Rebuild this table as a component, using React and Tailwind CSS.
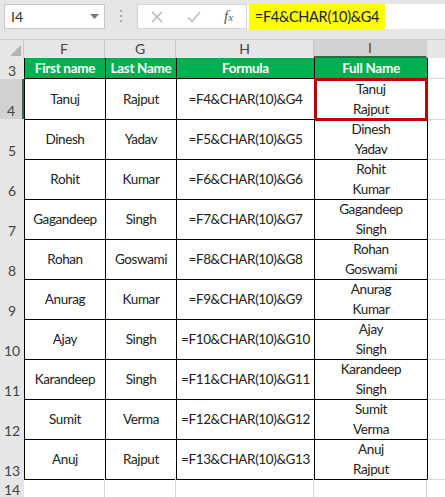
import React from "react";

const rows = [
  { n: 4, f: "Tanuj", g: "Rajput" },
  { n: 5, f: "Dinesh", g: "Yadav" },
  { n: 6, f: "Rohit", g: "Kumar" },
  { n: 7, f: "Gagandeep", g: "Singh" },
  { n: 8, f: "Rohan", g: "Goswami" },
  { n: 9, f: "Anurag", g: "Kumar" },
  { n: 10, f: "Ajay", g: "Singh" },
  { n: 11, f: "Karandeep", g: "Singh" },
  { n: 12, f: "Sumit", g: "Verma" },
  { n: 13, f: "Anuj", g: "Rajput" },
];

const gridCols = "grid grid-cols-[24px_81px_71px_138px_113px_1fr]";

const FormulaBar = () => (
  <div className="relative h-[40px] bg-[#e6e6e6] border-b border-[#d0d0d0]">
    {/* name box */}
    <div className="absolute left-[4px] top-[4px] flex h-[25px] w-[101px] items-center justify-between border border-[#c6c6c6] bg-white pl-[6px] pr-[5px]">
      <span className="text-[14px] text-[#333]">I4</span>
      <svg width="9" height="6" viewBox="0 0 9 6"><path d="M0 0h9L4.5 5z" fill="#777" /></svg>
    </div>
    {/* dots */}
    <div className="absolute left-[120px] top-[10px] flex flex-col gap-[3px]">
      <span className="h-[2px] w-[2px] bg-[#aaa]" />
      <span className="h-[2px] w-[2px] bg-[#aaa]" />
      <span className="h-[2px] w-[2px] bg-[#aaa]" />
    </div>
    {/* icons box */}
    <div className="absolute left-[137px] top-[4px] flex h-[25px] w-[110px] items-center border border-[#d4d4d4] bg-white">
      <svg className="ml-[13px]" width="12" height="12" viewBox="0 0 12 12"><path d="M1 1l10 10M11 1L1 11" stroke="#b8b8b8" strokeWidth="1.6" /></svg>
      <svg className="ml-[24px]" width="14" height="12" viewBox="0 0 14 12"><path d="M1 6.5l4 4L13 1" stroke="#c4c4c4" strokeWidth="1.8" fill="none" /></svg>
      <span className="ml-[23px] font-['Liberation_Serif'] text-[15px] italic text-[#555]">
        f<span className="text-[11px]">x</span>
      </span>
    </div>
    {/* formula input */}
    <div className="absolute left-[247px] right-0 top-[4px] flex h-[25px] items-center bg-white pl-[2px]">
      <div className="flex h-[25px] w-[136px] items-center justify-center bg-[#ffff00] text-[14.5px] tracking-[-0.3px] text-[#222]">
        =F4&amp;CHAR(10)&amp;G4
      </div>
    </div>
  </div>
);

const ColHeaders = () => {
  const letters = ["F", "G", "H", "I"];
  return (
    <div className={`${gridCols} h-[18px] bg-[#e6e6e6]`}>
      <div className="relative border-r border-[#c8c8c8]">
        <svg className="absolute bottom-[2px] right-[2px]" width="11" height="11" viewBox="0 0 11 11"><path d="M11 0v11H0z" fill="#b4b4b4" /></svg>
      </div>
      {letters.map((l) => (
        <div
          key={l}
          className={`flex items-center justify-center border-r border-[#c8c8c8] text-[14px] leading-none text-[#444] ${l === "I" ? "bg-[#d2d2d2] border-b-2 border-b-[#217346]" : ""}`}
        >
          {l}
        </div>
      ))}
      <div />
    </div>
  );
};

const App = () => {
  return (
    <div className="h-[497px] w-[445px] overflow-hidden bg-white font-['Lato','Liberation_Sans',sans-serif]">
      <FormulaBar />
      <ColHeaders />
      {/* row 3 header */}
      <div className={`${gridCols} h-[21px]`}>
        <div className="flex items-end justify-center bg-[#e6e6e6] pb-[1px] text-[14px] leading-none text-[#444]">3</div>
        {["First name", "Last Name", "Formula", "Full Name"].map((h) => (
          <div
            key={h}
            className="flex items-center justify-center whitespace-nowrap border-b border-l border-black bg-[#00b050] text-[13.5px] font-bold tracking-[-0.3px] text-white"
          >
            {h}
          </div>
        ))}
        <div className="border-l border-black border-b border-b-[#d9d9d9]" />
      </div>
      {rows.map((r) => {
        const selected = r.n === 4;
        return (
          <div key={r.n} className={`${gridCols} h-[40px] text-[13.5px] tracking-[-0.4px] text-[#222]`}>
            <div
              className={`flex items-end justify-center pb-[1px] text-[14px] leading-none tracking-normal text-[#444] border-b border-[#c8c8c8] ${selected ? "bg-[#d2d2d2] border-r-2 border-r-[#217346]" : "bg-[#e6e6e6]"}`}
            >
              {r.n}
            </div>
            <div className="flex items-center justify-center whitespace-nowrap border-b border-l border-black">{r.f}</div>
            <div className="flex items-center justify-center whitespace-nowrap border-b border-l border-black">{r.g}</div>
            <div className="flex items-center justify-center whitespace-nowrap border-b border-l border-black">
              =F{r.n}&amp;CHAR(10)&amp;G{r.n}
            </div>
            <div className="relative flex flex-col items-center justify-center whitespace-nowrap border-b border-l border-black leading-[20px]">
              <span>{r.f}</span>
              <span>{r.g}</span>
              {selected && (
                <div className="absolute -left-[1px] -right-[1px] -top-[1px] -bottom-[2px] border-[3px] border-[#c00000]" />
              )}
            </div>
            <div className="border-b border-l border-b-[#d9d9d9] border-l-black" />
          </div>
        );
      })}
      <div className={`${gridCols} h-[18px]`}>
        <div className="flex items-end justify-center bg-[#e6e6e6] text-[14px] leading-none text-[#444]">14</div>
        <div className="border-r border-[#d9d9d9]" />
        <div className="border-r border-[#d9d9d9]" />
        <div className="border-r border-[#d9d9d9]" />
        <div className="border-r border-[#d9d9d9]" />
        <div />
      </div>
    </div>
  );
};

export default App;
